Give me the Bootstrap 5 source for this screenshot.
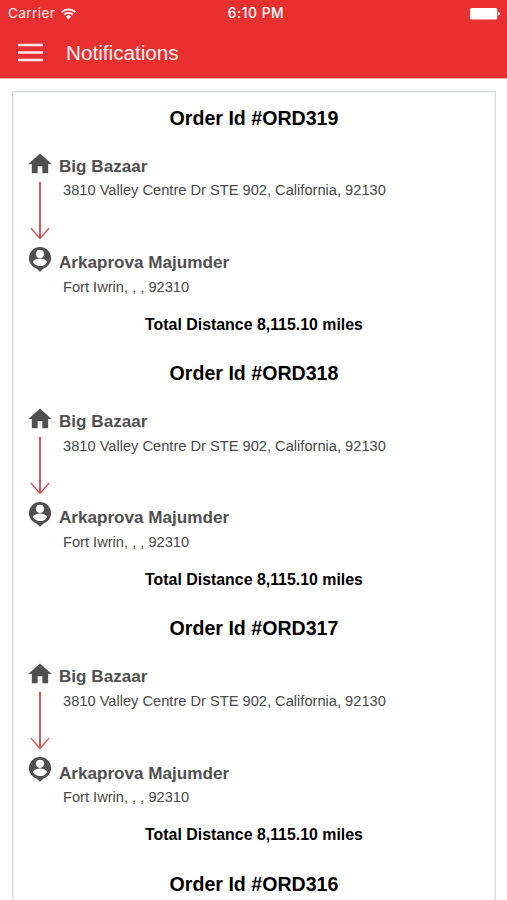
<!DOCTYPE html>
<html lang="en">
<head>
<meta charset="utf-8">
<meta name="viewport" content="width=device-width, initial-scale=1">
<title>Notifications</title>
<link href="https://cdn.jsdelivr.net/npm/bootstrap@5.3.0/dist/css/bootstrap.min.css" rel="stylesheet">
<style>
body{font-family:"Liberation Sans",Arial,sans-serif;background:#fff}
.screen{height:900px}
.app-header{background:#e83030;height:79px;border-bottom:1px solid #efa5a5}
.status-bar{height:27px;font-family:Inter,sans-serif;font-size:13.2px;line-height:27px;padding:0 7px 0 8px}
.status-bar .side{flex:1 1 0}
.carrier{font-size:13.6px;letter-spacing:.4px;opacity:.9}
.clock{font-weight:500;font-size:13.8px;letter-spacing:.55px;padding-left:4px}
.title-bar{height:51px;padding-left:18px}
.page-title{font-size:20.7px;line-height:24px;margin-left:23px;opacity:.95}
.orders{margin:12px 11px 0 12px;border:1px solid #d9dcdd;border-bottom:0;border-radius:0;padding-top:.8px;box-shadow:inset 0 1px #eeeff0,inset 1px 0 #eeeff0,inset -1px 0 #eeeff0}
.order{height:255.3px;color:#000}
.order-id{font-size:19.6px;line-height:24px;padding-top:13px;height:57px}
.route{height:165px;padding-left:13px}
.stops-rail{width:28px}
.stop{height:96.4px;padding:6px 0 0 5px}
.stop-name{font-size:17.1px;line-height:22px;color:#505050}
.stop-address{font-size:14.65px;line-height:20px;padding:2.5px 0 0 4px;color:#484848}
.distance{font-size:15.9px;line-height:20px}
</style>
</head>
<body>
<svg class="d-none">
<symbol id="home" viewBox="0 0 24 24"><path d="M10 20v-6h4v6h5v-8h3L12 3 2 12h3v8z"/></symbol>
<symbol id="arrow" viewBox="0 0 20 58"><path d="M10 0V56" fill="none" stroke="#df5257" stroke-width="2"/><path d="M.8 46L10 56.5 19.2 46" fill="none" stroke="#df5257" stroke-width="1.3"/></symbol>
<symbol id="person" viewBox="0 0 23 25"><path fill-rule="evenodd" d="M11.5 0A11.1 11.1 0 0 0 .4 11.1c0 4.9 3.2 9 7.6 10.5l3.5 3.1 3.5-3.1c4.4-1.5 7.6-5.6 7.6-10.5A11.1 11.1 0 0 0 11.5 0zm0 2.7a4.1 4.1 0 1 1 0 8.2 4.1 4.1 0 0 1 0-8.2zm0 16.4c-3 0-5.6-1.6-7.1-3.9.1-2.4 4.7-3.7 7.1-3.7s7 1.3 7.1 3.7a8.4 8.4 0 0 1-7.1 3.9z"/></symbol>
</svg>
<div class="screen d-flex flex-column overflow-hidden">
<header class="app-header text-white flex-shrink-0">
  <div class="status-bar d-flex align-items-center">
    <div class="side d-flex align-items-center"><span class="carrier">Carrier</span>
      <svg width="15" height="12" viewBox="0 0 15 12" fill="none" stroke="#fff" stroke-width="1.7" style="margin-left:6px"><path d="M.7 4.1a9.6 9.6 0 0 1 13.6 0M3 6.7a6.3 6.3 0 0 1 9 0"/><path d="M4.9 8.6a3.7 3.7 0 0 1 5.2 0L7.5 11.4z" fill="#fff" stroke="none"/></svg>
    </div>
    <div class="clock">6:10 PM</div>
    <div class="side d-flex justify-content-end"><svg width="30" height="12" viewBox="0 0 30 12" fill="#fff"><rect width="27.2" height="11.5" rx="1.5"/><path d="M28 4q2 .2 2 1.8T28 7.6z"/></svg></div>
  </div>
  <div class="title-bar d-flex align-items-center">
    <svg width="25" height="19" viewBox="0 0 25 19" stroke="#fff" stroke-opacity=".9" stroke-width="2.5"><path d="M0 2h25M0 9.5h25M0 17h25"/></svg>
    <div class="page-title">Notifications</div>
  </div>
</header>
<main class="orders card flex-grow-1" id="orders"></main>
</div>
<script src="https://cdn.jsdelivr.net/npm/bootstrap@5.3.0/dist/js/bootstrap.bundle.min.js"></script>
<script>
const heading = n => `<div class="order-id fw-bold text-center">Order Id #ORD${n}</div>`;
document.getElementById('orders').innerHTML = [319, 318, 317].map(n => `
<section class="order flex-shrink-0">
  ${heading(n)}
  <div class="route d-flex">
    <div class="stops-rail d-flex flex-column align-items-center flex-shrink-0">
      <svg width="28" height="28" fill="#505050"><use href="#home"/></svg>
      <svg width="20" height="58" style="margin-top:4px"><use href="#arrow"/></svg>
      <svg width="24" height="25" viewBox="0 0 24 25" fill="#505050" style="margin-top:7px"><use href="#person" x=".5" width="23" height="25"/></svg>
    </div>
    <div>
      <div class="stop"><div class="stop-name fw-bold">Big Bazaar</div><div class="stop-address">3810 Valley Centre Dr STE 902, California, 92130</div></div>
      <div class="stop"><div class="stop-name fw-bold">Arkaprova Majumder</div><div class="stop-address">Fort Iwrin, , , 92310</div></div>
    </div>
  </div>
  <div class="distance fw-bold text-center">Total Distance 8,115.10 miles</div>
</section>`).join('') + `<section class="text-black" style="height:40px">${heading(316)}</section>`;
</script>
</body>
</html>
